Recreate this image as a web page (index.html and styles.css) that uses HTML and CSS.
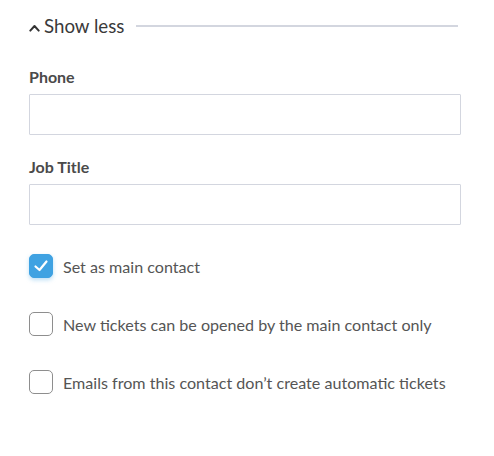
FILE: index.html
```html
<!DOCTYPE html>
<html>
<head>
<meta charset="utf-8">
<link rel="stylesheet" href="styles.css">
</head>
<body>
<div class="panel">
  <div class="toggle-row">
    <button class="toggle">
      <svg class="chev" width="11" height="8" viewBox="0 0 11 8"><path d="M1.3 6.6 L5.5 2 L9.7 6.6" fill="none" stroke="#333" stroke-width="2" stroke-linecap="round" stroke-linejoin="round"/></svg>
      <span>Show less</span>
    </button>
    <div class="rule"></div>
  </div>

  <div class="field">
    <label class="label">Phone</label>
    <div class="input"></div>
  </div>
  <div class="field">
    <label class="label">Job Title</label>
    <div class="input"></div>
  </div>

  <div class="checks">
    <div class="check">
      <span class="box checked">
        <svg width="16" height="14" viewBox="0 0 16 14"><path d="M2.5 7.5 L6.5 11 L13.5 2.5" fill="none" stroke="#fff" stroke-width="2.2" stroke-linecap="round" stroke-linejoin="round"/></svg>
      </span>
      <span class="text">Set as main contact</span>
    </div>
    <div class="check">
      <span class="box"></span>
      <span class="text">New tickets can be opened by the main contact only</span>
    </div>
    <div class="check">
      <span class="box"></span>
      <span class="text">Emails from this contact don’t create automatic tickets</span>
    </div>
  </div>
</div>
</body>
</html>
```

FILE: styles.css
```css
html, body {
  margin: 0;
  background: #fff;
}
body {
  font-family: "Lato", "Open Sans", sans-serif;
  color: #4d4d4d;
}
.panel {
  padding: 14px 33px 0 29px;
  width: 432px;
}
.toggle-row {
  display: flex;
  align-items: center;
  height: 24px;
  margin-bottom: 29px;
}
.toggle {
  display: flex;
  align-items: center;
  gap: 4px;
  background: none;
  border: 0;
  padding: 0;
  font: inherit;
  font-size: 18.7px;
  color: #3a3a3a;
}
.chev {
  margin-top: 4px;
}
.rule {
  height: 2px;
  background: #d3d6df;
  margin-left: 12px;
  width: 322px;
}
.field {
  margin-bottom: 22px;
}
.label {
  display: block;
  font-size: 16px;
  font-weight: 700;
  line-height: 20px;
  height: 20px;
  margin-bottom: 7px;
  color: #4a4a4a;
}
.input {
  height: 39px;
  border: 1px solid #d3d6df;
  border-radius: 1px;
}
.checks {
  display: flex;
  flex-direction: column;
  gap: 34px;
  padding-top: 7px;
}
.check {
  display: flex;
  align-items: center;
  height: 24px;
  gap: 10px;
}
.box {
  width: 22px;
  height: 22px;
  border: 1px solid #8e8e8e;
  border-radius: 5px;
  display: flex;
  align-items: center;
  justify-content: center;
  flex: none;
}
.box.checked {
  background: #3fa2e2;
  border-color: #3fa2e2;
  box-shadow: 0 2px 4px rgba(63, 162, 226, 0.35);
}
.text {
  font-size: 16.1px;
  color: #555;
}
```
